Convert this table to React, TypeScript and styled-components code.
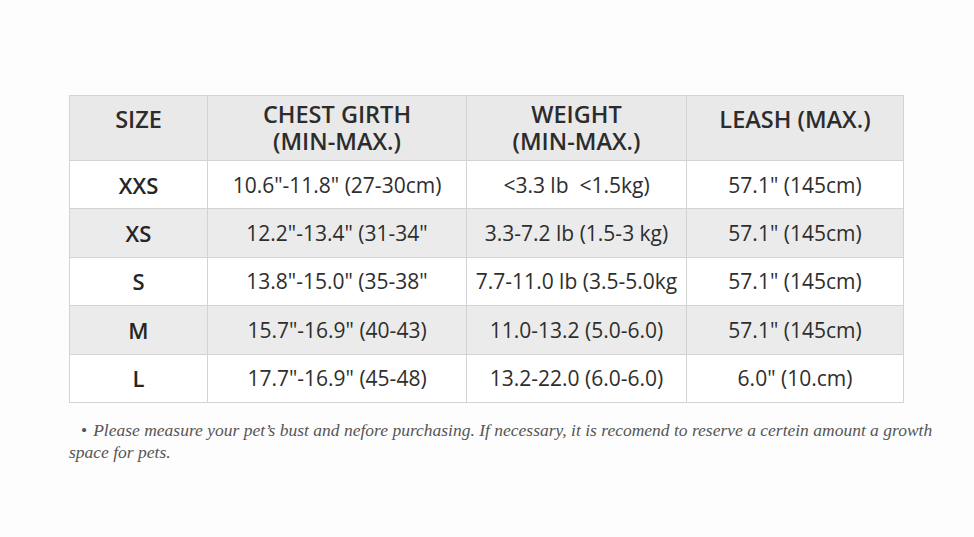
import React from 'react';
import styled, { createGlobalStyle } from 'styled-components';

const GlobalStyle = createGlobalStyle`
	html, body {
		margin: 0;
		padding: 0;
		background: #fdfdfd;
	}
`;

const Page = styled.div`
	width: 974px;
	height: 537px;
	padding: 95px 0 0 69px;
	box-sizing: border-box;
	font-family: 'Open Sans', 'Noto Sans', sans-serif;
	color: #333;
`;

const Table = styled.table`
	width: 834px;
	table-layout: fixed;
	border-collapse: collapse;
	border: 1px solid #d3d3d3;
`;

const Row = styled.tr<{ $shaded?: boolean }>`
	height: 48.4px;
	background: ${(p) => (p.$shaded ? '#ebebeb' : '#ffffff')};
`;

const HeadRow = styled.tr`
	height: 65px;
	background: #e9e9e9;
`;

const Head = styled.th<{ $single?: boolean }>`
	border: 1px solid #d3d3d3;
	font-size: 23.5px;
	font-weight: 600;
	line-height: 27px;
	text-align: center;
	vertical-align: top;
	color: #2c2c2c;
	padding: ${(p) => (p.$single ? '10px 0 0' : '5px 0 0')};
	white-space: nowrap;
`;

const Cell = styled.td<{ $bold?: boolean }>`
	border: 1px solid #d3d3d3;
	font-size: ${(p) => (p.$bold ? '22px' : '21px')};
	font-weight: ${(p) => (p.$bold ? 600 : 400)};
	text-align: center;
	vertical-align: middle;
	color: ${(p) => (p.$bold ? '#262626' : '#2e2e2e')};
	padding: 0;
	white-space: pre;
	overflow: hidden;
`;

const Note = styled.p`
	width: 878px;
	margin: 16px 0 0 0;
	font-family: 'Liberation Serif', 'DejaVu Serif', serif;
	font-style: italic;
	font-size: 17.5px;
	line-height: 22px;
	color: #555;
`;

const Bullet = styled.span`
	display: inline-block;
	margin: 0 6px 0 12px;
	font-style: normal;
`;

type SizeRow = {
	size: string;
	chest: string;
	weight: string;
	leash: string;
};

const rows: SizeRow[] = [
	{ size: 'XXS', chest: '10.6"-11.8" (27-30cm)', weight: '<3.3 lb  <1.5kg)', leash: '57.1" (145cm)' },
	{ size: 'XS', chest: '12.2"-13.4" (31-34"', weight: '3.3-7.2 lb (1.5-3 kg)', leash: '57.1" (145cm)' },
	{ size: 'S', chest: '13.8"-15.0" (35-38"', weight: '7.7-11.0 lb (3.5-5.0kg', leash: '57.1" (145cm)' },
	{ size: 'M', chest: '15.7"-16.9" (40-43)', weight: '11.0-13.2 (5.0-6.0)', leash: '57.1" (145cm)' },
	{ size: 'L', chest: '17.7"-16.9" (45-48)', weight: '13.2-22.0 (6.0-6.0)', leash: '6.0" (10.cm)' },
];

export default function App() {
	return (
		<Page>
			<GlobalStyle />
			<Table>
				<colgroup>
					<col style={{ width: 138 }} />
					<col style={{ width: 259 }} />
					<col style={{ width: 220 }} />
					<col style={{ width: 217 }} />
				</colgroup>
				<thead>
					<HeadRow>
						<Head $single>SIZE</Head>
						<Head>
							CHEST GIRTH
							<br />
							(MIN-MAX.)
						</Head>
						<Head>
							WEIGHT
							<br />
							(MIN-MAX.)
						</Head>
						<Head $single>LEASH (MAX.)</Head>
					</HeadRow>
				</thead>
				<tbody>
					{rows.map((r, i) => (
						<Row key={r.size} $shaded={i % 2 === 1}>
							<Cell $bold>{r.size}</Cell>
							<Cell>{r.chest}</Cell>
							<Cell>{r.weight}</Cell>
							<Cell>{r.leash}</Cell>
						</Row>
					))}
				</tbody>
			</Table>
			<Note>
				<Bullet>•</Bullet>
				Please measure your pet’s bust and nefore purchasing. If necessary, it is recomend to reserve a certein amount a growth space for pets.
			</Note>
		</Page>
	);
}
